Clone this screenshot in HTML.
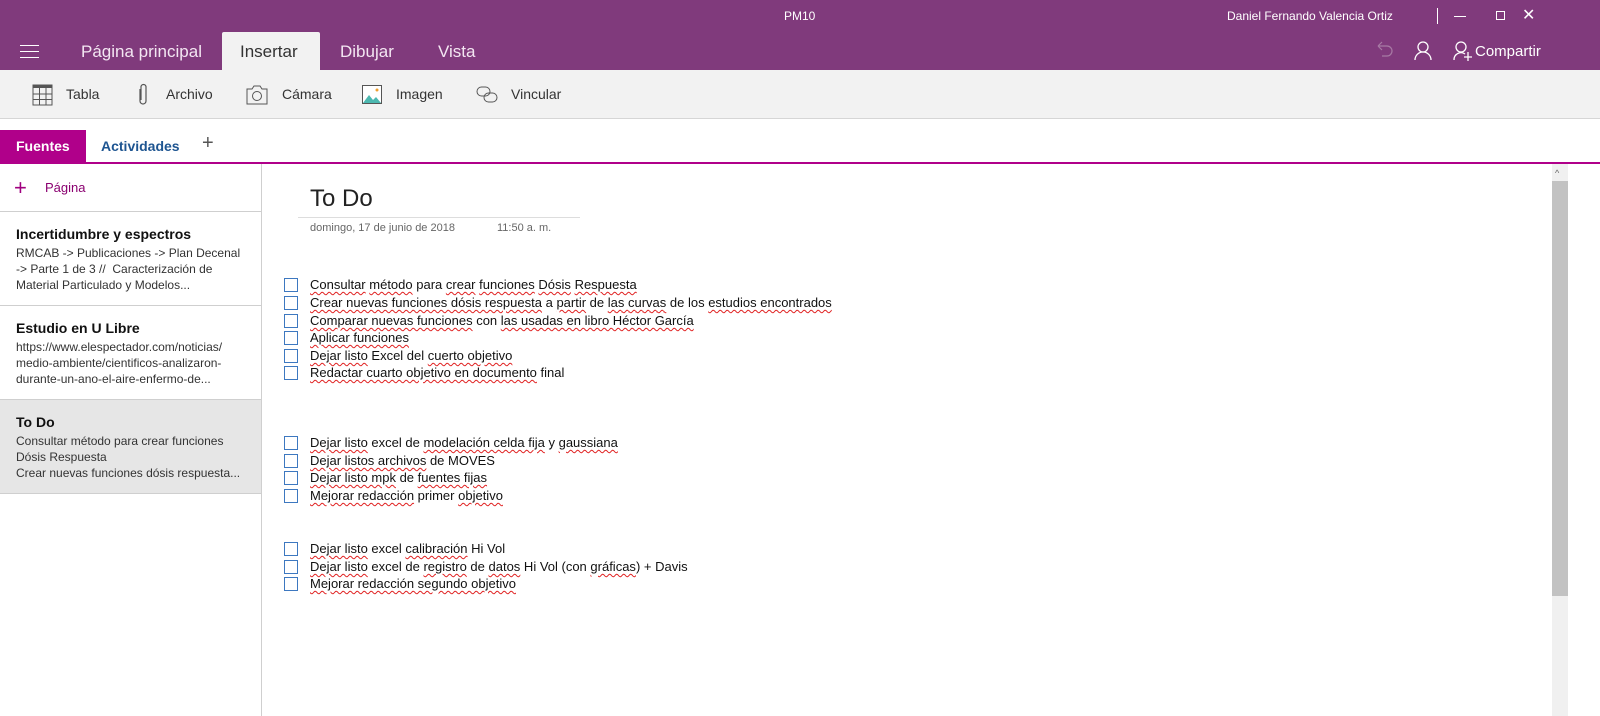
<!DOCTYPE html>
<html><head><meta charset="utf-8"><style>
*{margin:0;padding:0;box-sizing:border-box}
body{width:1600px;height:716px;overflow:hidden;background:#fff;font-family:"Liberation Sans",sans-serif;position:relative;color:#222}
.abs{position:absolute}
#top{left:0;top:0;width:1600px;height:70px;background:#803a7c;color:#fff}
.tab{position:absolute;top:42px;font-size:17px;color:#f3e6f2}
#tb{left:0;top:70px;width:1600px;height:49px;background:#f2f2f2;border-bottom:1px solid #d6d6d6}
.tool{position:absolute;top:16px;font-size:14px;color:#333}
.sp{text-decoration:underline wavy #e02020;text-decoration-thickness:1px;text-underline-offset:2px}
.row{position:absolute;left:284px;font-size:13px;color:#111;height:17px;line-height:14px}
.row i{position:absolute;left:0;top:0;width:14px;height:14px;border:1px solid #3d78c0}
.row span.t{position:absolute;left:26px;top:0;white-space:nowrap}
.pg{position:absolute;left:0;width:261px;border-bottom:1px solid #cfcfcf;padding:14px 0 0 16px}
.pg b{display:block;font-size:14px;color:#111;margin-bottom:3px}
.pg div{font-size:12px;color:#333;line-height:16px}
</style></head><body>
<div id="top" class="abs">
<div class="abs" style="left:784px;top:9px;font-size:12px">PM10</div>
<div class="abs" style="left:1227px;top:9px;font-size:12px">Daniel Fernando Valencia Ortiz</div>
<div class="abs" style="left:1437px;top:8px;width:1px;height:16px;background:#fff"></div>
<div class="abs" style="left:1454px;top:16px;width:12px;height:1px;background:#fff"></div>
<div class="abs" style="left:1496px;top:11px;width:9px;height:9px;border:1px solid #fff"></div>
<div class="abs" style="left:1522px;top:5px;font-size:16px">✕</div>
<div class="abs" style="left:20px;top:45px;width:19px;height:1px;background:#fff;box-shadow:0 6px 0 #fff,0 12px 0 #fff"></div>
<div class="tab" style="left:81px">Página principal</div>
<div class="abs" style="left:222px;top:32px;width:98px;height:38px;background:#f2f2f2;border-radius:2px 2px 0 0"></div>
<div class="tab" style="left:240px;color:#333">Insertar</div>
<div class="tab" style="left:340px">Dibujar</div>
<div class="tab" style="left:438px">Vista</div>
<svg class="abs" style="left:1374px;top:40px" width="20" height="22"><path d="M4 6h9a5 5 0 0 1 0 10H8M4 6l4-4M4 6l4 4" fill="none" stroke="#a77aa4" stroke-width="1.2"/></svg>
<svg class="abs" style="left:1412px;top:40px" width="22" height="22"><circle cx="11" cy="7" r="5" fill="none" stroke="#fff" stroke-width="1.3"/><path d="M3 20a8 8 0 0 1 16 0" fill="none" stroke="#fff" stroke-width="1.3"/></svg>
<svg class="abs" style="left:1452px;top:40px" width="22" height="22"><circle cx="9" cy="7" r="5" fill="none" stroke="#fff" stroke-width="1.3"/><path d="M2 20a7 7 0 0 1 11-6M16 12v9M12 17h8" fill="none" stroke="#fff" stroke-width="1.3"/></svg>
<div class="abs" style="left:1475px;top:43px;font-size:15px">Compartir</div>
</div>
<div id="tb" class="abs">
<svg class="abs" style="left:32px;top:14px" width="22" height="22"><rect x="1" y="1" width="19" height="20" fill="none" stroke="#555"/><rect x="1" y="1" width="19" height="3" fill="#555"/><path d="M1 10h19M1 15.5h19M7.5 4v17M14 4v17" stroke="#555"/></svg>
<div class="tool" style="left:66px">Tabla</div>
<svg class="abs" style="left:136px;top:13px" width="14" height="24"><path d="M4 6v12a3 3 0 0 0 6 0V4a2.5 2.5 0 0 0-5 0v13" fill="none" stroke="#555" stroke-width="1.2"/></svg>
<div class="tool" style="left:166px">Archivo</div>
<svg class="abs" style="left:246px;top:15px" width="22" height="20"><path d="M1 4h5l2-3h6l2 3h5v15H1z" fill="none" stroke="#555"/><circle cx="11" cy="11" r="4.5" fill="none" stroke="#555"/></svg>
<div class="tool" style="left:282px">Cámara</div>
<svg class="abs" style="left:362px;top:15px" width="22" height="20"><rect x="0.5" y="0.5" width="19" height="18" fill="#fff" stroke="#555"/><path d="M1 18l6-8 4 5 3-3 5 6z" fill="#4cb8b0"/><circle cx="15" cy="5" r="1.5" fill="#f0a030"/></svg>
<div class="tool" style="left:396px">Imagen</div>
<svg class="abs" style="left:476px;top:15px" width="24" height="20"><rect x="1" y="2" width="13" height="9" rx="4.5" fill="none" stroke="#555"/><rect x="8" y="8" width="13" height="9" rx="4.5" fill="none" stroke="#555"/></svg>
<div class="tool" style="left:511px">Vincular</div>
</div>
<div class="abs" style="left:0;top:130px;width:86px;height:32px;background:#b0008a;color:#fff;font-weight:bold;font-size:14px;padding:8px 0 0 16px">Fuentes</div>
<div class="abs" style="left:101px;top:138px;font-weight:bold;font-size:14px;color:#1e5591">Actividades</div>
<div class="abs" style="left:202px;top:132px;font-size:20px;color:#555;font-weight:300">+</div>
<div class="abs" style="left:0;top:162px;width:1600px;height:2px;background:#b0008a"></div>
<div class="abs" style="left:261px;top:164px;width:1px;height:552px;background:#cfcfcf"></div>
<div class="abs" style="left:14px;top:175px;font-size:22px;color:#a0007f;font-weight:300">+</div>
<div class="abs" style="left:45px;top:180px;font-size:13px;color:#8a0070">Página</div>
<div class="abs" style="left:0;top:211px;width:261px;height:1px;background:#cfcfcf"></div>
<div class="pg" style="top:212px;height:94px"><b>Incertidumbre y espectros</b><div>RMCAB -&gt; Publicaciones -&gt; Plan Decenal<br>-&gt; Parte 1 de 3 //&nbsp; Caracterización de<br>Material Particulado y Modelos...</div></div>
<div class="pg" style="top:306px;height:94px"><b>Estudio en U Libre</b><div>https://www.elespectador.com/noticias/<br>medio-ambiente/cientificos-analizaron-<br>durante-un-ano-el-aire-enfermo-de...</div></div>
<div class="pg" style="top:400px;height:94px;background:#e6e6e6"><b>To Do</b><div>Consultar método para crear funciones<br>Dósis Respuesta<br>Crear nuevas funciones dósis respuesta...</div></div>
<div class="abs" style="left:310px;top:185px;font-size:24px;color:#222;font-weight:300">To Do</div>
<div class="abs" style="left:298px;top:217px;width:282px;height:1px;background:#ddd"></div>
<div class="abs" style="left:310px;top:222px;font-size:11px;color:#666">domingo, 17 de junio de 2018</div>
<div class="abs" style="left:497px;top:222px;font-size:11px;color:#666">11:50 a. m.</div>
<div class="row" style="top:278px"><i></i><span class="t"><span class="sp">Consultar</span> <span class="sp">método</span> para <span class="sp">crear</span> <span class="sp">funciones</span> <span class="sp">Dósis</span> <span class="sp">Respuesta</span></span></div>
<div class="row" style="top:296px"><i></i><span class="t"><span class="sp">Crear nuevas funciones dósis respuesta</span> a <span class="sp">partir</span> de <span class="sp">las curvas</span> de los <span class="sp">estudios encontrados</span></span></div>
<div class="row" style="top:314px"><i></i><span class="t"><span class="sp">Comparar nuevas funciones</span> con <span class="sp">las usadas en libro Héctor García</span></span></div>
<div class="row" style="top:331px"><i></i><span class="t"><span class="sp">Aplicar funciones</span></span></div>
<div class="row" style="top:349px"><i></i><span class="t"><span class="sp">Dejar listo</span> Excel del <span class="sp">cuerto objetivo</span></span></div>
<div class="row" style="top:366px"><i></i><span class="t"><span class="sp">Redactar cuarto objetivo en documento</span> final</span></div>
<div class="row" style="top:436px"><i></i><span class="t"><span class="sp">Dejar listo</span> excel de <span class="sp">modelación celda fija</span> y <span class="sp">gaussiana</span></span></div>
<div class="row" style="top:454px"><i></i><span class="t"><span class="sp">Dejar listos archivos</span> de MOVES</span></div>
<div class="row" style="top:471px"><i></i><span class="t"><span class="sp">Dejar listo mpk</span> de <span class="sp">fuentes fijas</span></span></div>
<div class="row" style="top:489px"><i></i><span class="t"><span class="sp">Mejorar redacción</span> primer <span class="sp">objetivo</span></span></div>
<div class="row" style="top:542px"><i></i><span class="t"><span class="sp">Dejar listo</span> excel <span class="sp">calibración</span> Hi Vol</span></div>
<div class="row" style="top:560px"><i></i><span class="t"><span class="sp">Dejar listo</span> excel de <span class="sp">registro</span> de <span class="sp">datos</span> Hi Vol (con <span class="sp">gráficas</span>) + Davis</span></div>
<div class="row" style="top:577px"><i></i><span class="t"><span class="sp">Mejorar redacción segundo objetivo</span></span></div>
<div class="abs" style="left:1552px;top:164px;width:16px;height:552px;background:#f0f0f0"></div>
<div class="abs" style="left:1555px;top:168px;font-size:9px;color:#666">^</div>
<div class="abs" style="left:1552px;top:181px;width:16px;height:415px;background:#c2c2c2"></div>
</body></html>
